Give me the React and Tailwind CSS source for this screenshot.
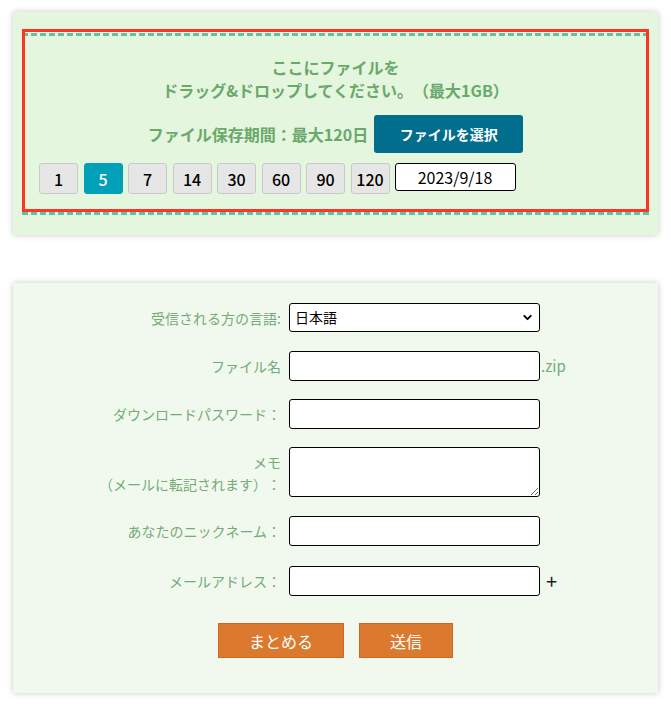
import { useState } from 'react';
import { ChevronDown } from 'lucide-react';

const DAYS = ['1', '5', '7', '14', '30', '60', '90', '120'];

const FieldRow = ({ label, className = '', children, top = false }) => (
  <div className={`flex ${top ? 'items-start' : 'items-center'} ${className}`}>
    <div className="w-[268px] text-right text-[14px] leading-[22px] text-[#74ab77]">{label}</div>
    <div className="ml-[8px] flex items-center">{children}</div>
  </div>
);

export default function App() {
  const [days, setDays] = useState('5');

  return (
    <div className="min-h-[706px] bg-white pt-[12px] font-['Noto_Sans_CJK_JP','Noto_Sans',sans-serif] [text-spacing-trim:space-all]">
      {/* Upload panel */}
      <div className="mx-[13px] w-[645px] bg-[#e4f6dd] px-[9px] pt-[21px] pb-[20px] shadow-[0_0_6px_rgba(0,0,0,0.22)]">
        <div className="relative border-[3px] border-dashed border-[#5ec2a6] pt-[20px] pb-[18px]">
          {/* drag-over outline */}
          <div className="pointer-events-none absolute -top-[7px] -left-[3px] -right-[3px] bottom-[0px] border-[3px] border-[#ff3326]" />

          <p className="text-center text-[16px] font-bold leading-[23px] text-[#6aa86c]">
            ここにファイルを
            <br />
            ドラッグ&amp;ドロップしてください。（最大1GB）
          </p>

          <div className="mt-[13px] flex items-center justify-center gap-[6px]">
            <span className="text-[16px] font-bold text-[#6aa86c]">ファイル保存期間：最大120日</span>
            <button className="h-[38px] w-[149px] rounded-[3px] bg-[#006e8c] text-[14px] font-bold text-white">
              ファイルを選択
            </button>
          </div>

          <div className="mt-[10px] flex items-start gap-[5.5px] pl-[14px]">
            {DAYS.map(d => (
              <button
                key={d}
                onClick={() => setDays(d)}
                className={`h-[31px] w-[39px] rounded-[3px] border text-[16px] font-medium ${
                  days === d
                    ? 'border-[#00a0b9] bg-[#00a0b9] text-white'
                    : 'border-[#c9c9c9] bg-[#e6e6e6] text-black'
                }`}
              >
                {d}
              </button>
            ))}
            <div className="ml-[-0.5px] flex h-[28px] w-[121px] items-center justify-center rounded-[3px] border border-black bg-white text-[16px] text-black">
              2023/9/18
            </div>
          </div>
        </div>
      </div>

      {/* Form panel */}
      <div className="mx-[13px] mt-[48px] w-[645px] bg-[#f1f9ee] pt-[20px] pb-[35px] shadow-[0_0_6px_rgba(0,0,0,0.22)]">
        <FieldRow label="受信される方の言語:">
          <div className="relative">
            <select className="h-[29px] w-[251px] appearance-none rounded-[3px] border border-black bg-white pl-[5px] text-[14px] text-black outline-none">
              <option>日本語</option>
            </select>
            <ChevronDown className="pointer-events-none absolute right-[6px] top-[8px] h-[13px] w-[13px] text-black" strokeWidth={3.5} />
          </div>
        </FieldRow>

        <FieldRow label="ファイル名" className="mt-[19px]">
          <input className="h-[30px] w-[251px] rounded-[3px] border border-black bg-white outline-none" />
          <span className="ml-[1px] text-[15px] text-[#74ab77]">.zip</span>
        </FieldRow>

        <FieldRow label="ダウンロードパスワード：" className="mt-[18px]">
          <input type="password" className="h-[30px] w-[251px] rounded-[3px] border border-black bg-white outline-none" />
        </FieldRow>

        <FieldRow
          top
          className="mt-[18px]"
          label={
            <div className="pt-[4px]">
              メモ
              <br />
              （メールに転記されます）：
            </div>
          }
        >
          <textarea className="h-[50px] w-[251px] rounded-[3px] border border-black bg-white outline-none" />
        </FieldRow>

        <FieldRow label="あなたのニックネーム：" className="mt-[19px]">
          <input className="h-[30px] w-[251px] rounded-[3px] border border-black bg-white outline-none" />
        </FieldRow>

        <FieldRow label="メールアドレス：" className="mt-[20px]">
          <input className="h-[30px] w-[251px] rounded-[3px] border border-black bg-white outline-none" />
          <span className="ml-[6px] text-[20px] leading-none text-[#222]">+</span>
        </FieldRow>

        <div className="mt-[27px] flex justify-center gap-[15px]">
          <button className="h-[35px] w-[126px] border border-[#d2642a] bg-[#db7a2e] text-[16px] text-white">まとめる</button>
          <button className="h-[35px] w-[94px] border border-[#d2642a] bg-[#db7a2e] text-[16px] text-white">送信</button>
        </div>
      </div>
    </div>
  );
}
